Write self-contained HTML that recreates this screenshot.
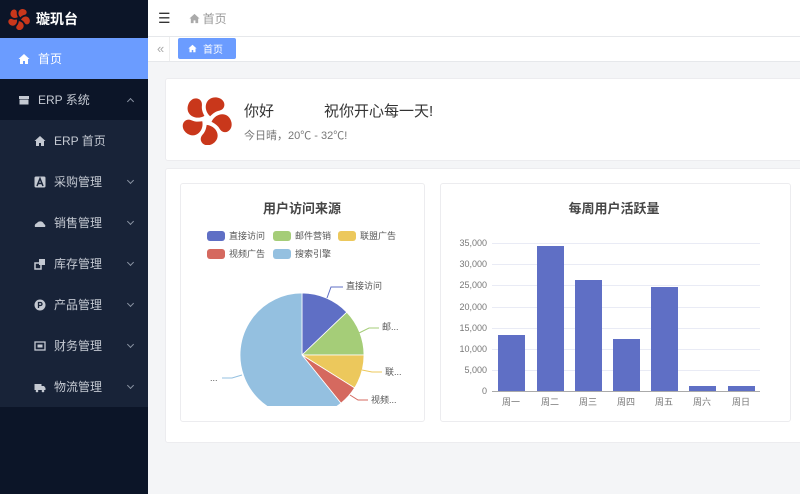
<!DOCTYPE html>
<html><head><meta charset="utf-8"><style>
*{margin:0;padding:0;box-sizing:border-box}
body{width:800px;height:494px;overflow:hidden;font-family:"Liberation Sans","Noto Sans CJK SC",sans-serif;background:#f4f5f7;position:relative}
.sb{position:absolute;left:0;top:0;width:148px;height:494px;background:#0c1528}
.logo{height:38px;display:flex;align-items:center;padding-left:8px;color:#fff;font-weight:bold;font-size:14px}
.mi{height:41px;display:flex;align-items:center;color:#c4c9d2;font-size:12px;position:relative}
.mi .ic{width:12px;height:12px;margin-right:8px;display:inline-block}
.act{background:#6b9cff;color:#fff}
.sub{background:#182338}
.chev{position:absolute;right:15px;top:17px;width:5px;height:5px;border-right:1px solid #8a93a3;border-bottom:1px solid #8a93a3;transform:rotate(45deg)}
.chev.up{transform:rotate(-135deg);top:20px}
.main{position:absolute;left:148px;top:0;right:0;bottom:0}
.hd{height:37px;background:#fff;border-bottom:1px solid #e6e8eb;display:flex;align-items:center;padding-left:10px;font-size:12px;color:#999}
.tabs{height:25px;background:#fff;border-bottom:1px solid #e6e8eb;position:relative}
.card{position:absolute;background:#fff;border:1px solid #ececef;border-radius:3px}
</style></head><body>
<svg width="0" height="0" style="position:absolute"><defs><path id="p" d="M2.5,-3 C-4,-9 -1,-19 8,-18 C15,-17 16,-9 10,-7.5 C6.5,-6.8 4.5,-5 2.5,-3Z"/></defs></svg>
<div class="sb">
 <div class="logo"><svg width="22" height="22" viewBox="-20 -20 40 40"><g fill="#c9371b"><use href="#p"/><use href="#p" transform="rotate(72)"/><use href="#p" transform="rotate(144)"/><use href="#p" transform="rotate(216)"/><use href="#p" transform="rotate(288)"/></g></svg><span style="margin-left:6px">璇玑台</span></div>
 <div class="mi act" style="padding-left:18px"><svg class="ic" viewBox="0 0 12 12"><path d="M6 1L0.5 6H2v5h3V8h2v3h3V6h1.5z" fill="#fff"/></svg>首页</div>
 <div class="mi" style="padding-left:18px"><svg class="ic" viewBox="0 0 12 12"><rect x="1" y="2" width="10" height="3" fill="#c4c9d2"/><rect x="1.5" y="5.5" width="9" height="5" fill="#c4c9d2"/></svg>ERP 系统<span class="chev up"></span></div>
 <div class="sub">
 <div class="mi" style="padding-left:34px"><svg class="ic" viewBox="0 0 12 12"><path d="M6 1L0.5 6H2v5h3V8h2v3h3V6h1.5z" fill="#c4c9d2"/></svg>ERP 首页</div>
 <div class="mi" style="padding-left:34px"><svg class="ic" viewBox="0 0 12 12"><rect x="0.5" y="0.5" width="11" height="11" rx="1.5" fill="#c4c9d2"/><path d="M3 10L6 2.5 9 10M4.2 7.5h3.6" stroke="#182338" stroke-width="1.5" fill="none"/></svg>采购管理<span class="chev"></span></div>
 <div class="mi" style="padding-left:34px"><svg class="ic" viewBox="0 0 12 12"><path d="M1 10a3 3 0 0 1 2-4a4 4 0 0 1 7 1a2 2 0 0 1 1 3z" fill="#c4c9d2"/></svg>销售管理<span class="chev"></span></div>
 <div class="mi" style="padding-left:34px"><svg class="ic" viewBox="0 0 12 12"><rect x="1" y="5" width="6" height="6" fill="none" stroke="#c4c9d2" stroke-width="1.5"/><rect x="5" y="1" width="6" height="6" fill="#c4c9d2"/></svg>库存管理<span class="chev"></span></div>
 <div class="mi" style="padding-left:34px"><svg class="ic" viewBox="0 0 12 12"><circle cx="6" cy="6" r="5.5" fill="#c4c9d2"/><path d="M4.5 9V3.5h2a1.5 1.5 0 0 1 0 3h-2" stroke="#182338" stroke-width="1.3" fill="none"/></svg>产品管理<span class="chev"></span></div>
 <div class="mi" style="padding-left:34px"><svg class="ic" viewBox="0 0 12 12"><rect x="1" y="2" width="10" height="8" fill="none" stroke="#c4c9d2" stroke-width="1.3"/><rect x="3.5" y="4.5" width="5" height="3" fill="#c4c9d2"/></svg>财务管理<span class="chev"></span></div>
 <div class="mi" style="padding-left:34px"><svg class="ic" viewBox="0 0 12 12"><rect x="0.5" y="3" width="7" height="6" fill="#c4c9d2"/><path d="M7.5 5h2.5l1.5 2v2h-4z" fill="#c4c9d2"/><circle cx="3" cy="10" r="1.3" fill="#c4c9d2"/><circle cx="9" cy="10" r="1.3" fill="#c4c9d2"/></svg>物流管理<span class="chev"></span></div>
 </div>
</div>
<div class="main">
 <div class="hd"><span style="color:#333;font-size:14px;margin-right:18px">☰</span><svg width="11" height="11" viewBox="0 0 12 12"><path d="M6 1L0.5 6H2v5h3V8h2v3h3V6h1.5z" fill="#aaa"/></svg><span style="margin-left:3px">首页</span></div>
 <div class="tabs"><span style="position:absolute;left:9px;top:4px;color:#aaa;font-size:13px">«</span><div style="position:absolute;left:21px;top:0;width:1px;height:24px;background:#eee"></div><div style="position:absolute;left:30px;top:1px;width:58px;height:21px;background:#6b9cff;border-radius:2px;color:#fff;font-size:10px;display:flex;align-items:center;padding-left:10px"><svg width="9" height="9" viewBox="0 0 12 12"><path d="M6 1L0.5 6H2v5h3V8h2v3h3V6h1.5z" fill="#fff"/></svg><span style="margin-left:6px">首页</span></div></div>
</div>
<div class="card" style="left:165px;top:78px;width:640px;height:83px">
 <svg style="position:absolute;left:16px;top:16px" width="50" height="50" viewBox="-20 -20 40 40"><g fill="#c9371b"><use href="#p"/><use href="#p" transform="rotate(72)"/><use href="#p" transform="rotate(144)"/><use href="#p" transform="rotate(216)"/><use href="#p" transform="rotate(288)"/></g></svg>
 <div style="position:absolute;left:78px;top:21px;font-size:15px;color:#333">你好<span style="margin-left:50px">祝你开心每一天!</span></div>
 <div style="position:absolute;left:78px;top:48px;font-size:11px;color:#777">今日晴，20℃ - 32℃!</div>
</div>
<div class="card" style="left:165px;top:168px;width:640px;height:275px"></div>
<div class="card" style="left:180px;top:183px;width:245px;height:239px"></div>
<div class="card" style="left:440px;top:183px;width:351px;height:239px"></div>
<svg style="position:absolute;left:0;top:0" width="800" height="494">
 <g font-family="Liberation Sans,Noto Sans CJK SC,sans-serif">
 <text x="302" y="213" text-anchor="middle" font-size="13" font-weight="bold" fill="#464646">用户访问来源</text>
 <g font-size="9" fill="#555">
 <rect x="207" y="231" width="18" height="10" rx="3" fill="#5f6fc5"/><text x="229" y="239">直接访问</text>
 <rect x="273" y="231" width="18" height="10" rx="3" fill="#a5cd78"/><text x="295" y="239">邮件营销</text>
 <rect x="338" y="231" width="18" height="10" rx="3" fill="#ecc85c"/><text x="360" y="239">联盟广告</text>
 <rect x="207" y="249" width="18" height="10" rx="3" fill="#d5695f"/><text x="229" y="257">视频广告</text>
 <rect x="273" y="249" width="18" height="10" rx="3" fill="#94c0e0"/><text x="295" y="257">搜索引擎</text>
 </g>
 <clipPath id="c"><rect x="180" y="280" width="245" height="126"/></clipPath>
 <g clip-path="url(#c)" stroke="#fff" stroke-width="0.8">
 <path d="M302 355L302 293A62 62 0 0 1 346.8 312.2Z" fill="#5f6fc5"/>
 <path d="M302 355L346.8 312.2A62 62 0 0 1 364 355Z" fill="#a5cd78"/>
 <path d="M302 355L364 355A62 62 0 0 1 354.6 387.9Z" fill="#ecc85c"/>
 <path d="M302 355L354.6 387.9A62 62 0 0 1 341 403.2Z" fill="#d5695f"/>
 <path d="M302 355L341 403.2A62 62 0 1 1 302 293Z" fill="#94c0e0"/>
 </g>
 <g fill="none" stroke-width="1">
 <path d="M327 298l4-11h12" stroke="#5f6fc5"/>
 <path d="M359 333l10-5h10" stroke="#a5cd78"/>
 <path d="M362 370l10 2h10" stroke="#ecc85c"/>
 <path d="M350 395l8 5h10" stroke="#d5695f"/>
 <path d="M242 375l-10 3h-10" stroke="#94c0e0"/>
 </g>
 <g font-size="9" fill="#555">
 <text x="346" y="289">直接访问</text><text x="382" y="330">邮...</text><text x="385" y="375">联...</text><text x="371" y="403">视频...</text><text x="210" y="381">...</text>
 </g>
 <text x="614" y="213" text-anchor="middle" font-size="13" font-weight="bold" fill="#464646">每周用户活跃量</text>
 <g stroke="#e9ebf5" stroke-width="1">
 <path d="M492 243.5H760M492 264.5H760M492 285.5H760M492 307.5H760M492 328.5H760M492 349.5H760M492 370.5H760"/>
 </g>
 <path d="M492 391.5H760" stroke="#aaa"/>
 <g font-size="9" fill="#777" text-anchor="end">
 <text x="487" y="246">35,000</text><text x="487" y="267">30,000</text><text x="487" y="288">25,000</text><text x="487" y="310">20,000</text><text x="487" y="331">15,000</text><text x="487" y="352">10,000</text><text x="487" y="373">5,000</text><text x="487" y="394">0</text>
 </g>
 <g fill="#5f6fc5">
 <rect x="498" y="335" width="27" height="56"/><rect x="537" y="246" width="27" height="145"/><rect x="575" y="280" width="27" height="111"/><rect x="613" y="339" width="27" height="52"/><rect x="651" y="287" width="27" height="104"/><rect x="689" y="386" width="27" height="5"/><rect x="728" y="386" width="27" height="5"/>
 </g>
 <g font-size="9" fill="#777" text-anchor="middle">
 <text x="511" y="405">周一</text><text x="550" y="405">周二</text><text x="588" y="405">周三</text><text x="626" y="405">周四</text><text x="664" y="405">周五</text><text x="702" y="405">周六</text><text x="741" y="405">周日</text>
 </g>
 </g>
</svg>
</body></html>
